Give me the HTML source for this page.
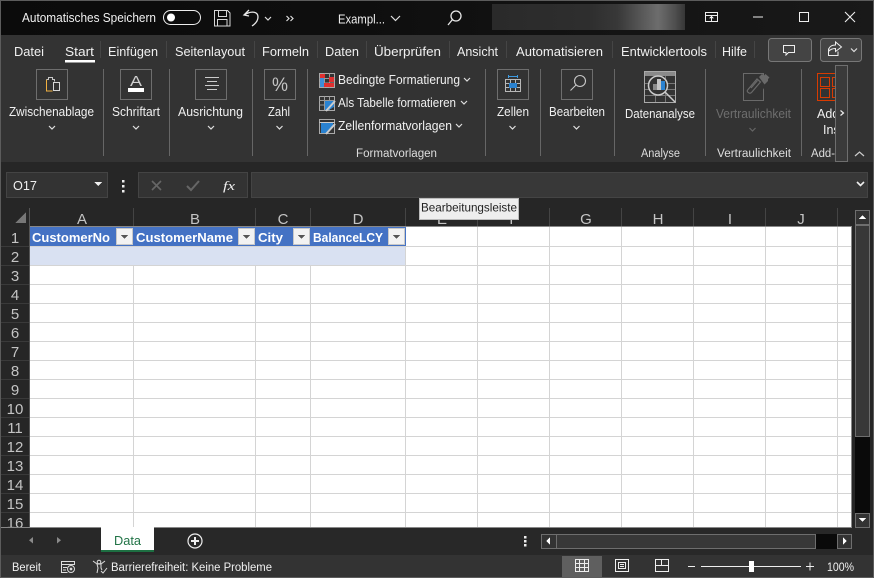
<!DOCTYPE html>
<html><head><meta charset="utf-8"><style>
html,body{margin:0;padding:0;background:#262626;overflow:hidden}
svg{display:block}
text{font-family:"Liberation Sans",sans-serif;fill:#f0f0f0;font-size:12.5px}
.r{fill:#ddd;font-size:11.5px}
.h{fill:#c4c4c4;font-size:15px;text-anchor:middle}
.n{fill:#c4c4c4;font-size:15px;text-anchor:middle}
.t{fill:#fff;font-weight:bold;font-size:13px}
.ch{fill:none;stroke:#ddd;stroke-width:1.2}
.ic{fill:none;stroke:#d8d8d8;stroke-width:1}
.box{fill:none;stroke:#6e6e6e;stroke-width:1}
.sep{stroke:#666;stroke-width:1}
.ts{stroke:#454545;stroke-width:1}
</style></head><body>
<svg width="874" height="578" viewBox="0 0 874 578" xmlns="http://www.w3.org/2000/svg" shape-rendering="crispEdges">
<defs>
<linearGradient id="bl" x1="0" x2="1" y1="0" y2="0">
<stop offset="0" stop-color="#2a2a2a"/><stop offset=".5" stop-color="#2e2e2e"/><stop offset=".65" stop-color="#383838"/><stop offset=".86" stop-color="#6d6d6d"/><stop offset=".95" stop-color="#4e4e4e"/><stop offset="1" stop-color="#363636"/>
</linearGradient>
<linearGradient id="tb" x1="0" x2="1" y1="0" y2="0">
<stop offset="0" stop-color="#0b0b0b"/><stop offset=".4" stop-color="#0e0e0e"/><stop offset="1" stop-color="#191919"/>
</linearGradient>
</defs>
<rect width="874" height="578" fill="#262626"/>
<!-- Title bar -->
<rect x="0" y="0" width="874" height="35" fill="url(#tb)"/>
<rect x="492" y="4" width="193" height="26" fill="url(#bl)"/>
<text x="22" y="22" textLength="134" lengthAdjust="spacingAndGlyphs">Automatisches Speichern</text>
<rect x="163.500" y="10.500" width="37" height="14" rx="7" fill="none" stroke="#eee" shape-rendering="auto"/>
<circle cx="171" cy="17.500" r="4" fill="#fff" shape-rendering="auto"/>
<g class="ic"><path d="M214.500 10.500h13l2.500 2.500v13h-15.500zM218.500 10.500v6h8v-6M217.500 25.500v-6h9.500v6"/></g>
<g fill="none" stroke="#e8e8e8" stroke-width="1.300" shape-rendering="auto"><path d="M249 10l-5 5 5 1M244 15c8-5 14-3 14 2 0 4-3 7-6 9"/></g>
<path class="ch" d="M265 17l3 3 3-3" shape-rendering="auto"/>
<path class="ch" d="M286.500 16l2.500 2.500-2.500 2.500M290.500 16l2.500 2.500-2.500 2.500" shape-rendering="auto"/>
<text x="338" y="23.500" textLength="47" lengthAdjust="spacingAndGlyphs">Exampl...</text>
<path d="M391 16l4.500 4.500L400 16" fill="none" stroke="#e0e0e0" stroke-width="1.200" shape-rendering="auto"/>
<g fill="none" stroke="#e8e8e8" stroke-width="1.300" shape-rendering="auto"><circle cx="456" cy="16" r="5"/><path d="M452.500 19.500L448 25"/></g>
<g fill="none" stroke="#eee" stroke-width="1"><path d="M705.500 12.500h12v9h-12zM705.500 15.500h12M711.500 21v-4M709.500 18.500l2-2 2 2"/></g>
<path d="M753 17h10" stroke="#eee" stroke-width="1"/>
<rect x="799.500" y="12.500" width="9" height="9" fill="none" stroke="#eee"/>
<path d="M845 12l10 10M855 12l-10 10" stroke="#eee" stroke-width="1.100" shape-rendering="auto"/>
<!-- Tabs + ribbon -->
<rect x="0" y="35" width="874" height="127" fill="#333"/>
<g>
<text x="14" y="56" textLength="30" lengthAdjust="spacingAndGlyphs">Datei</text>
<text x="65" y="56" textLength="29" lengthAdjust="spacingAndGlyphs" fill="#fff">Start</text>
<rect x="65" y="60" width="30" height="2.500" fill="#fff"/>
<text x="108" y="56" textLength="50" lengthAdjust="spacingAndGlyphs">Einfügen</text>
<text x="175" y="56" textLength="70" lengthAdjust="spacingAndGlyphs">Seitenlayout</text>
<text x="262" y="56" textLength="47" lengthAdjust="spacingAndGlyphs">Formeln</text>
<text x="325" y="56" textLength="34" lengthAdjust="spacingAndGlyphs">Daten</text>
<text x="374" y="56" textLength="67" lengthAdjust="spacingAndGlyphs">Überprüfen</text>
<text x="457" y="56" textLength="41" lengthAdjust="spacingAndGlyphs">Ansicht</text>
<text x="516" y="56" textLength="87" lengthAdjust="spacingAndGlyphs">Automatisieren</text>
<text x="621" y="56" textLength="86" lengthAdjust="spacingAndGlyphs">Entwicklertools</text>
<text x="722" y="56" textLength="25" lengthAdjust="spacingAndGlyphs">Hilfe</text>
</g>
<g class="ts"><path d="M100.500 41v17M166.500 41v17M254.500 41v17M317.500 41v17M366.500 41v17M449.500 41v17M506.500 41v17M612.500 41v17M715.500 41v17M754.500 41v17"/></g>
<rect x="768.500" y="38.500" width="43" height="23" rx="3" fill="#444" stroke="#777" shape-rendering="auto"/>
<path d="M783.500 45.500h11v7h-6l-2.500 2.500v-2.500h-2.500z" fill="none" stroke="#eee"/>
<rect x="820.500" y="38.500" width="41" height="23" rx="3" fill="#444" stroke="#777" shape-rendering="auto"/>
<g fill="none" stroke="#eee" shape-rendering="auto"><path d="M828.500 48.500v7h9.500v-4"/><path d="M828.500 51c0-4 3-6 7-6v-3l6 5-6 4.500v-3c-3 0-5 .5-7 3"/></g>
<path class="ch" d="M851 48.500l3 3 3-3" shape-rendering="auto"/>

<!-- Ribbon separators -->
<g class="sep"><path d="M103.500 69v87M169.500 69v87M252.500 69v87M307.500 69v87M485.500 69v87M540.500 69v87M614.500 69v87M705.500 69v87M801.500 69v87"/></g>
<!-- Ribbon box buttons -->
<rect x="36.500" y="69.500" width="31" height="30" class="box"/>
<rect x="120.500" y="69.500" width="31" height="30" class="box"/>
<rect x="195.500" y="69.500" width="31" height="30" class="box"/>
<rect x="264.500" y="69.500" width="31" height="30" class="box"/>
<rect x="497.500" y="69.500" width="31" height="30" class="box"/>
<rect x="561.500" y="69.500" width="31" height="30" class="box"/>
<!-- clipboard -->
<path d="M46.500 79.500v11.500h6" fill="none" stroke="#f0b040" stroke-width="1.200"/>
<path d="M46.500 79.500h2v-2h4v2h2v2" fill="none" stroke="#c8c8c8"/>
<rect x="53.500" y="82.500" width="6" height="8" fill="none" stroke="#d8d8d8"/>
<!-- font A -->
<text x="130" y="86" style="font-size:15px;fill:#cfcfcf" textLength="12" lengthAdjust="spacingAndGlyphs">A</text>
<rect x="128" y="88" width="16" height="4" fill="#fff"/>
<!-- align -->
<path d="M205 77.500h14M207 81.500h10M205 85.500h14M207 89.500h10" stroke="#ccc"/>
<!-- percent -->
<text x="272" y="91" style="font-size:19px;fill:#c4c4c4" textLength="16" lengthAdjust="spacingAndGlyphs">%</text>
<!-- cells -->
<g fill="none" stroke="#b8b8b8"><path d="M505.500 79.500h15v12h-15zM505.500 83.500h15M505.500 87.500h15M510.500 79.500v12M515.500 79.500v12"/></g>
<rect x="509" y="83" width="8" height="5" fill="#2a82d0"/>
<path d="M508.500 76.500h9M508.500 75v3M517.500 75v3" stroke="#3d9ae0"/>
<!-- search -->
<g fill="none" stroke="#c8c8c8" stroke-width="1.100" shape-rendering="auto"><circle cx="580" cy="81" r="5.500"/><path d="M576 85l-5.500 5.500"/></g>
<!-- Ribbon labels -->
<text x="9" y="116" textLength="85" lengthAdjust="spacingAndGlyphs">Zwischenablage</text>
<text x="112" y="116" textLength="48" lengthAdjust="spacingAndGlyphs">Schriftart</text>
<text x="178" y="116" textLength="65" lengthAdjust="spacingAndGlyphs">Ausrichtung</text>
<text x="268" y="116" textLength="22" lengthAdjust="spacingAndGlyphs">Zahl</text>
<text x="497" y="116" textLength="32" lengthAdjust="spacingAndGlyphs">Zellen</text>
<text x="549" y="116" textLength="56" lengthAdjust="spacingAndGlyphs">Bearbeiten</text>
<text x="625" y="118" textLength="70" lengthAdjust="spacingAndGlyphs">Datenanalyse</text>
<text x="716" y="118" textLength="75" lengthAdjust="spacingAndGlyphs" style="fill:#6e6e6e">Vertraulichkeit</text>
<text x="817" y="118">Add-</text>
<text x="823" y="134">Ins</text>
<g class="ch" shape-rendering="auto"><path d="M49 126l3 3 3-3M133 126l3 3 3-3M208 126l3 3 3-3M276.500 126l3 3 3-3M509.500 126l3 3 3-3M573.500 126l3 3 3-3"/></g>
<path d="M749.500 128l3 3 3-3" fill="none" stroke="#666" stroke-width="1.200" shape-rendering="auto"/>
<!-- Formatvorlagen -->
<rect x="319.500" y="73.500" width="15" height="14" fill="none" stroke="#aaa"/><path d="M319.500 78.500h15M319.500 83h15M324.500 73.500v14M329.500 73.500v14" stroke="#999"/>
<rect x="320" y="74" width="5" height="4" fill="#e03030"/><rect x="329" y="77" width="5" height="5" fill="#e03030"/><rect x="323" y="83" width="11" height="4" fill="#e03030"/><rect x="320" y="78" width="4" height="9" fill="#3d8ed8"/>
<g><rect x="319.500" y="96.500" width="15" height="14" fill="none" stroke="#aaa"/><path d="M319.500 100.500h15M319.500 105h15M324.500 96.500v14M329.500 96.500v14" stroke="#999"/><path d="M325 101h9v6l-5 3h-4z" fill="#2a82d0"/><path d="M326 111l9-10" stroke="#ccc" stroke-width="2" shape-rendering="auto"/></g>
<g><rect x="319.500" y="119.500" width="15" height="14" fill="none" stroke="#aaa"/><path d="M319.500 122.500h15" stroke="#ccc"/><path d="M321 123h12v5l-6 5h-6z" fill="#2a82d0"/><path d="M326 134l9-10" stroke="#ccc" stroke-width="2" shape-rendering="auto"/></g>
<text x="338" y="84" textLength="122" lengthAdjust="spacingAndGlyphs">Bedingte Formatierung</text>
<text x="338" y="107" textLength="118" lengthAdjust="spacingAndGlyphs">Als Tabelle formatieren</text>
<text x="338" y="130" textLength="114" lengthAdjust="spacingAndGlyphs">Zellenformatvorlagen</text>
<g class="ch" shape-rendering="auto"><path d="M464 78l3 3 3-3M461 101l3 3 3-3M456 124l3 3 3-3"/></g>
<!-- group labels -->
<text class="r" x="356" y="157" textLength="81" lengthAdjust="spacingAndGlyphs">Formatvorlagen</text>
<text class="r" x="641" y="157" textLength="39" lengthAdjust="spacingAndGlyphs">Analyse</text>
<text class="r" x="717" y="157" textLength="74" lengthAdjust="spacingAndGlyphs">Vertraulichkeit</text>
<text class="r" x="811" y="157" textLength="24" lengthAdjust="spacingAndGlyphs">Add-</text>
<!-- Datenanalyse icon -->
<rect x="644.500" y="71.500" width="31" height="31" fill="none" stroke="#aaa"/>
<rect x="645" y="72" width="30" height="4" fill="#8a8a8a"/>
<path d="M645 83.500h30M645 89.500h30M645 95.500h30M655.500 76v26M665.500 76v26" stroke="#777"/>
<circle cx="658" cy="85.500" r="9.500" fill="#333" stroke="#ccc" stroke-width="1.500" shape-rendering="auto"/>
<rect x="653" y="84" width="4" height="6" fill="#8a8a8a"/><rect x="657" y="79" width="4" height="11" fill="#c4c4c4"/><rect x="661" y="81" width="4" height="9" fill="#2a82d0"/>
<path d="M665 92l10 10" stroke="#ccc" stroke-width="1.500" shape-rendering="auto"/>
<!-- Vertraulichkeit icon -->
<rect x="743.500" y="73.500" width="20" height="27" fill="none" stroke="#6a6a6a"/>
<g shape-rendering="auto">
<path d="M746 88l11-13 13 4-8 12-8 6z" fill="#333"/>
<path d="M748 89.500l9-10.500 3.500 3-9 10.500c-1 1-2 1-3 .2l-.5-.4c-1-.8-1-1.800 0-2.800zM751 88l6.500-7.500" fill="none" stroke="#6a6a6a" stroke-width="1.200"/>
<path d="M759 77l3-3 2 1.500 1.500-1.500 4 3.500-1.500 1.500 0 2-3.500 3.500z" fill="#6a6a6a"/>
</g>
<!-- Add-ins icon -->
<g fill="none" stroke="#d83b01"><rect x="817.500" y="73.500" width="27" height="27"/></g>
<g fill="none" stroke="#d83b01"><rect x="820.500" y="77.500" width="9" height="9"/><rect x="832.500" y="77.500" width="9" height="9"/><rect x="820.500" y="88.500" width="9" height="9"/><rect x="832.500" y="88.500" width="9" height="9"/></g>
<!-- ribbon scroll button -->
<rect x="835.500" y="65.500" width="12" height="96" fill="#3a3a3a" stroke="#6e6e6e"/>
<path d="M840.500 110.500l3 2.500-3 2.500" fill="none" stroke="#eee" stroke-width="1.200" shape-rendering="auto"/>
<path d="M855 156l4.500-4 4.500 4" fill="none" stroke="#ccc" stroke-width="1.200" shape-rendering="auto"/>

<!-- Formula bar -->
<rect x="6.500" y="172.500" width="101" height="25" fill="#333" stroke="#444"/>
<text x="13" y="190" style="font-size:13px" textLength="24" lengthAdjust="spacingAndGlyphs">O17</text>
<path d="M94 182h8l-4 4z" fill="#eee"/>
<rect x="122" y="180" width="2.500" height="2.500" fill="#eee"/><rect x="122" y="185" width="2.500" height="2.500" fill="#eee"/><rect x="122" y="190" width="2.500" height="2.500" fill="#eee"/>
<rect x="138.500" y="172.500" width="109" height="25" fill="#333" stroke="#444"/>
<path d="M152 181l9 9M161 181l-9 9" stroke="#666" stroke-width="1.600" shape-rendering="auto"/>
<path d="M187 186l4 4 8-9" fill="none" stroke="#666" stroke-width="2" shape-rendering="auto"/>
<text x="223" y="190" style="font-size:13px;font-family:'Liberation Serif',serif;font-style:italic" textLength="12" lengthAdjust="spacingAndGlyphs">fx</text>
<rect x="251.500" y="172.500" width="616" height="25" fill="#383838" stroke="#444"/>
<path d="M857 182l3.500 3.500 3.500-3.500" fill="none" stroke="#eee" stroke-width="1.600" shape-rendering="auto"/>

<!-- Grid -->
<rect x="30" y="227" width="821" height="300" fill="#fff"/>
<rect x="29" y="226" width="823" height="1" fill="#888"/>
<rect x="851" y="226" width="1" height="302" fill="#888"/>
<g stroke="#d4d4d4" stroke-width="1">
<path d="M30 246.500h821M30 265.500h821M30 284.500h821M30 303.500h821M30 322.500h821M30 341.500h821M30 360.500h821M30 379.500h821M30 398.500h821M30 417.500h821M30 436.500h821M30 455.500h821M30 474.500h821M30 493.500h821M30 512.500h821"/>
<path d="M133.500 227v300M255.500 227v300M310.500 227v300M405.500 227v300M477.500 227v300M549.500 227v300M621.500 227v300M693.500 227v300M765.500 227v300M837.500 227v300"/>
</g>
<rect x="30" y="247" width="375" height="18" fill="#d9e1f2"/>
<rect x="30" y="227" width="376" height="19" fill="#4472c4"/>
<text class="t" x="32" y="242" textLength="78" lengthAdjust="spacingAndGlyphs">CustomerNo</text>
<text class="t" x="136" y="242" textLength="97" lengthAdjust="spacingAndGlyphs">CustomerName</text>
<text class="t" x="258" y="242" textLength="25" lengthAdjust="spacingAndGlyphs">City</text>
<text class="t" x="313" y="242" textLength="70" lengthAdjust="spacingAndGlyphs">BalanceLCY</text>
<g fill="#f2f2f2" stroke="#c8c8c8">
<rect x="116.500" y="228.500" width="16" height="16"/><rect x="238.500" y="228.500" width="16" height="16"/><rect x="293.500" y="228.500" width="16" height="16"/><rect x="388.500" y="228.500" width="16" height="16"/>
</g>
<g fill="#555"><path d="M121 235h7l-3.500 4zM243 235h7l-3.500 4zM298 235h7l-3.500 4zM393 235h7l-3.500 4z"/></g>
<!-- Column header -->
<g stroke="#444"><path d="M29.500 208v18M133.500 208v18M255.500 208v18M310.500 208v18M405.500 208v18M477.500 208v18M549.500 208v18M621.500 208v18M693.500 208v18M765.500 208v18M837.500 208v18"/></g>
<path d="M26 212v11H15z" fill="#777"/>
<g>
<text class="h" x="82" y="224">A</text><text class="h" x="195" y="224">B</text><text class="h" x="283" y="224">C</text><text class="h" x="358" y="224">D</text><text class="h" x="442" y="224">E</text><text class="h" x="514" y="224">F</text><text class="h" x="586" y="224">G</text><text class="h" x="658" y="224">H</text><text class="h" x="730" y="224">I</text><text class="h" x="801" y="224">J</text>
</g>
<g>
<text class="n" x="15" y="243">1</text><text class="n" x="15" y="262">2</text><text class="n" x="15" y="281">3</text><text class="n" x="15" y="300">4</text><text class="n" x="15" y="319">5</text><text class="n" x="15" y="338">6</text><text class="n" x="15" y="357">7</text><text class="n" x="15" y="376">8</text><text class="n" x="15" y="395">9</text><text class="n" x="15" y="414">10</text><text class="n" x="15" y="433">11</text><text class="n" x="15" y="452">12</text><text class="n" x="15" y="471">13</text><text class="n" x="15" y="490">14</text><text class="n" x="15" y="509">15</text><text class="n" x="15" y="528">16</text>
</g>
<g stroke="#3a3a3a"><path d="M0 246.500h29M0 265.500h29M0 284.500h29M0 303.500h29M0 322.500h29M0 341.500h29M0 360.500h29M0 379.500h29M0 398.500h29M0 417.500h29M0 436.500h29M0 455.500h29M0 474.500h29M0 493.500h29M0 512.500h29"/></g>
<path d="M29.500 208v320" stroke="#555"/>
<!-- Tooltip -->
<rect x="419.500" y="198.500" width="99" height="21" fill="#eee" stroke="#bbb"/>
<text x="421" y="211.500" style="font-size:12px;fill:#222" textLength="96" lengthAdjust="spacingAndGlyphs">Bearbeitungsleiste</text>

<!-- V scrollbar -->
<rect x="855" y="210" width="15" height="318" fill="#0a0a0a"/>
<rect x="855.500" y="210.500" width="14" height="14" fill="#333" stroke="#6e6e6e"/>
<rect x="855.500" y="225.500" width="14" height="211" fill="#383838" stroke="#6e6e6e"/>
<rect x="855.500" y="513.500" width="14" height="14" fill="#333" stroke="#6e6e6e"/>
<path d="M859 219h7l-3.500-4zM859 518h7l-3.500 4z" fill="#fff"/>

<!-- Tab bar -->
<rect x="0" y="527" width="851" height="1" fill="#888"/>
<rect x="0" y="528" width="874" height="27" fill="#282828"/>
<path d="M33 537v6.500l-4-3.250zM57 537v6.500l4-3.250z" fill="#8a8a8a" shape-rendering="auto"/>
<rect x="101" y="527" width="53" height="23" fill="#fff"/>
<rect x="101" y="550" width="53" height="2" fill="#1d6f42"/>
<text x="114" y="545" style="fill:#217346;font-size:13px" textLength="27" lengthAdjust="spacingAndGlyphs">Data</text>
<circle cx="195" cy="541" r="7" fill="none" stroke="#eee" stroke-width="1.200" shape-rendering="auto"/>
<path d="M191 541h8M195 537v8" stroke="#eee" stroke-width="1.600"/>
<rect x="524" y="536" width="2.500" height="2.500" fill="#eee"/><rect x="524" y="540" width="2.500" height="2.500" fill="#eee"/><rect x="524" y="544" width="2.500" height="2.500" fill="#eee"/>
<rect x="541" y="534" width="311" height="15" fill="#0a0a0a"/>
<rect x="541.500" y="534.500" width="15" height="14" fill="#333" stroke="#6e6e6e"/>
<rect x="556.500" y="534.500" width="259" height="14" fill="#383838" stroke="#6e6e6e"/>
<rect x="837.500" y="534.500" width="14" height="14" fill="#333" stroke="#6e6e6e"/>
<path d="M550 537.500v7l-4-3.500zM843 537.500v7l4-3.500z" fill="#fff"/>

<!-- Status bar -->
<rect x="0" y="555" width="874" height="23" fill="#333"/>
<text x="12" y="571" style="font-size:12px" textLength="29" lengthAdjust="spacingAndGlyphs">Bereit</text>
<g fill="none" stroke="#ddd"><path d="M61.500 561.500h13v3h-13zM61.500 564.500v8h6M63 567.500h4M63 570h3"/><circle cx="71" cy="569" r="3.500" shape-rendering="auto"/></g>
<circle cx="71" cy="569" r="1.300" fill="#ddd"/>
<g fill="none" stroke="#ddd" shape-rendering="auto"><circle cx="99" cy="562" r="1.800"/><path d="M93 561l4 3h4l4-3M97 564l1 4-1 5M101 564l0 4 1 2M101 571l2 2 4-5"/></g>
<text x="111" y="571" style="font-size:11.500px" textLength="161" lengthAdjust="spacingAndGlyphs">Barrierefreiheit: Keine Probleme</text>
<rect x="562" y="556" width="40" height="21" fill="#5f5f5f"/>
<g fill="none" stroke="#eee"><path d="M575.500 559.500h13v12h-13zM575.500 563.500h13M575.500 567.500h13M579.500 559.500v12M584.500 559.500v12"/></g>
<g fill="none" stroke="#eee"><rect x="615.500" y="559.500" width="13" height="12"/><rect x="618.500" y="562.500" width="7" height="6"/><path d="M620 564.500h4M620 566.500h4"/></g>
<g fill="none" stroke="#eee"><path d="M655.500 559.500h13v12h-13zM655.500 565.500h13M661.500 559.500v6"/></g>
<path d="M688 566.500h7M701 566.500h100M806 566.500h8M810 562.500v8" stroke="#eee"/>
<rect x="749" y="561" width="5" height="11" fill="#fff"/>
<text x="827" y="571" style="font-size:12px" textLength="27" lengthAdjust="spacingAndGlyphs">100%</text>

<!-- Window border -->
<rect x="0.500" y="0.500" width="873" height="577" fill="none" stroke="#5c5c5c"/>
</svg>
</body></html>
